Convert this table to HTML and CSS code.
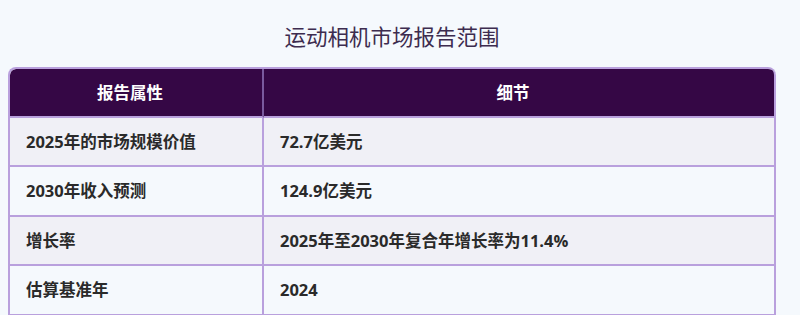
FILE: index.html
```html
<!DOCTYPE html>
<html lang="zh-CN">
<head>
<meta charset="utf-8">
<title>运动相机市场报告范围</title>
<link rel="stylesheet" href="styles.css">
</head>
<body>
<div class="wrap">
  <h2 class="title">运动相机市场报告范围</h2>
  <table class="report">
    <thead>
      <tr><th>报告属性</th><th>细节</th></tr>
    </thead>
    <tbody>
      <tr><td>2025年的市场规模价值</td><td>72.7亿美元</td></tr>
      <tr><td>2030年收入预测</td><td>124.9亿美元</td></tr>
      <tr><td>增长率</td><td>2025年至2030年复合年增长率为11.4%</td></tr>
      <tr><td>估算基准年</td><td>2024</td></tr>
    </tbody>
  </table>
</div>
</body>
</html>
```

FILE: styles.css
```css
html, body {
  margin: 0;
  padding: 0;
  background: #f5f9fd;
}
body {
  padding: 0 8px;
  font-family: "Open Sans", "Noto Sans CJK SC", sans-serif;
  color: #2a2a2a;
}
.wrap {
  width: 768px;
}
.title {
  margin: 20px 0 15px;
  font-family: "Noto Sans CJK SC", sans-serif;
  font-weight: normal;
  font-size: 21.5px;
  line-height: 32px;
  text-align: center;
  color: #3d2c4f;
}
.report {
  width: 100%;
  border-collapse: separate;
  border-spacing: 0;
  border-top: 2px solid #b9a0dd;
  border-left: 2px solid #b9a0dd;
  border-radius: 8px 8px 0 0;
  overflow: hidden;
  font-size: 16.5px;
  font-weight: bold;
  table-layout: fixed;
}
.report th, .report td {
  border-right: 2px solid #b9a0dd;
  border-bottom: 2px solid #b9a0dd;
  line-height: 19.5px;
  padding: 14px 16px;
  text-align: left;
}
.report th:first-child, .report td:first-child {
  width: 220px;
}
.report th {
  background: #350745;
  color: #ffffff;
  text-align: center;
  padding: 14px 22px 13px 10px;
}
.report th:first-child {
  border-right-color: #7a5a9e;
  border-top-left-radius: 6px;
}
.report th:last-child {
  border-top-right-radius: 6px;
}
.report tbody tr:nth-child(odd) td {
  background: #f0f0f6;
}
.report tbody tr:nth-child(even) td {
  background: #f5f9fd;
}
```
